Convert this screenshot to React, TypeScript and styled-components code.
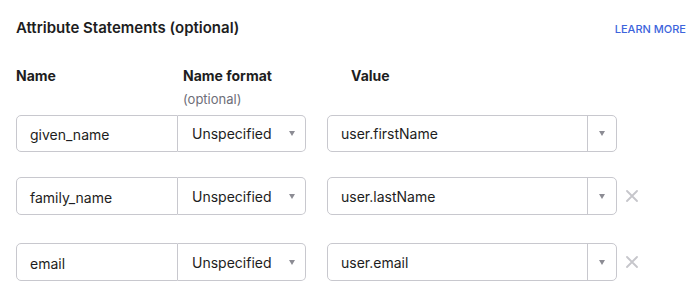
import styled, { createGlobalStyle } from "styled-components";

const GlobalStyle = createGlobalStyle`
  body {
    margin: 0;
    background: #ffffff;
    font-family: Inter, "Noto Sans", sans-serif;
    color: #1d1d21;
  }
`;

const Section = styled.section`
  width: 700px;
  box-sizing: border-box;
  padding: 18px 14px 0 16px;
`;

const Header = styled.div`
  display: flex;
  justify-content: space-between;
  align-items: baseline;
`;

const Title = styled.h2`
  margin: 0;
  font-size: 15px;
  line-height: 20px;
  font-weight: 600;
  color: #1d1d21;
`;

const LearnMore = styled.a`
  font-size: 11px;
  font-weight: 500;
  color: #3d64dc;
  text-decoration: none;
  cursor: pointer;
`;

const Columns = styled.div`
  display: grid;
  grid-template-columns: 162px 128px 21px 290px;
  margin-top: 29px;
`;

const ColHead = styled.div<{ $indent?: number }>`
  padding-left: ${(p) => p.$indent ?? 0}px;
  font-size: 14px;
  line-height: 18px;
  font-weight: 700;
  color: #1d1d21;
`;

const Hint = styled.div`
  margin-top: 6px;
  font-size: 13px;
  line-height: 16px;
  font-weight: 400;
  color: #6e6e78;
`;

const Row = styled.div<{ $space: number }>`
  display: flex;
  align-items: center;
  margin-top: ${(p) => p.$space}px;
`;

const Group = styled.div<{ $height: number }>`
  display: flex;
  height: ${(p) => p.$height}px;
`;

const TextField = styled.div`
  width: 162px;
  box-sizing: border-box;
  display: flex;
  align-items: center;
  padding: 2px 13px 0;
  border: 1px solid #c8c8ce;
  border-radius: 5px 0 0 5px;
  font-size: 14px;
`;

const Select = styled.div`
  width: 128px;
  box-sizing: border-box;
  display: flex;
  align-items: center;
  justify-content: space-between;
  padding: 0 10px 0 14px;
  border: 1px solid #c8c8ce;
  border-left: none;
  border-radius: 0 5px 5px 0;
  font-size: 14px;
`;

const Combo = styled.div<{ $height: number }>`
  display: flex;
  width: 290px;
  height: ${(p) => p.$height}px;
  margin-left: 21px;
  box-sizing: border-box;
  border: 1px solid #c8c8ce;
  border-radius: 5px;
`;

const ComboText = styled.div`
  flex: 1;
  display: flex;
  align-items: center;
  padding-left: 13px;
  font-size: 14px;
  border-right: 1px solid #c8c8ce;
`;

const ComboToggle = styled.div`
  width: 28px;
  display: flex;
  align-items: center;
  justify-content: center;
`;

const Caret = styled.span`
  width: 0;
  height: 0;
  border-left: 3.5px solid transparent;
  border-right: 3.5px solid transparent;
  border-top: 5px solid #8c8c94;
`;

const Remove = styled.button`
  margin-left: 7px;
  padding: 0;
  width: 16px;
  height: 16px;
  display: flex;
  align-items: center;
  justify-content: center;
  background: none;
  border: none;
  cursor: pointer;
`;

const CloseIcon = () => (
  <svg width="12" height="12" viewBox="0 0 12 12">
    <path d="M1 1L11 11M11 1L1 11" stroke="#c6c6cb" strokeWidth="1.8" strokeLinecap="round" />
  </svg>
);

type Attr = { name: string; value: string; removable: boolean; space: number; height: number };

const attrs: Attr[] = [
  { name: "given_name", value: "user.firstName", removable: false, space: 8, height: 37 },
  { name: "family_name", value: "user.lastName", removable: true, space: 25, height: 38 },
  { name: "email", value: "user.email", removable: true, space: 28, height: 38 },
];

export default function App() {
  return (
    <>
      <GlobalStyle />
      <Section>
        <Header>
          <Title>Attribute Statements (optional)</Title>
          <LearnMore>LEARN MORE</LearnMore>
        </Header>
        <Columns>
          <ColHead>Name</ColHead>
          <ColHead $indent={5}>
            Name format
            <Hint>(optional)</Hint>
          </ColHead>
          <div />
          <ColHead $indent={24}>Value</ColHead>
        </Columns>
        {attrs.map((a) => (
          <Row key={a.name} $space={a.space}>
            <Group $height={a.height}>
              <TextField>{a.name}</TextField>
              <Select>
                Unspecified
                <Caret />
              </Select>
            </Group>
            <Combo $height={a.height}>
              <ComboText>{a.value}</ComboText>
              <ComboToggle>
                <Caret />
              </ComboToggle>
            </Combo>
            {a.removable && (
              <Remove aria-label="Remove">
                <CloseIcon />
              </Remove>
            )}
          </Row>
        ))}
      </Section>
    </>
  );
}
